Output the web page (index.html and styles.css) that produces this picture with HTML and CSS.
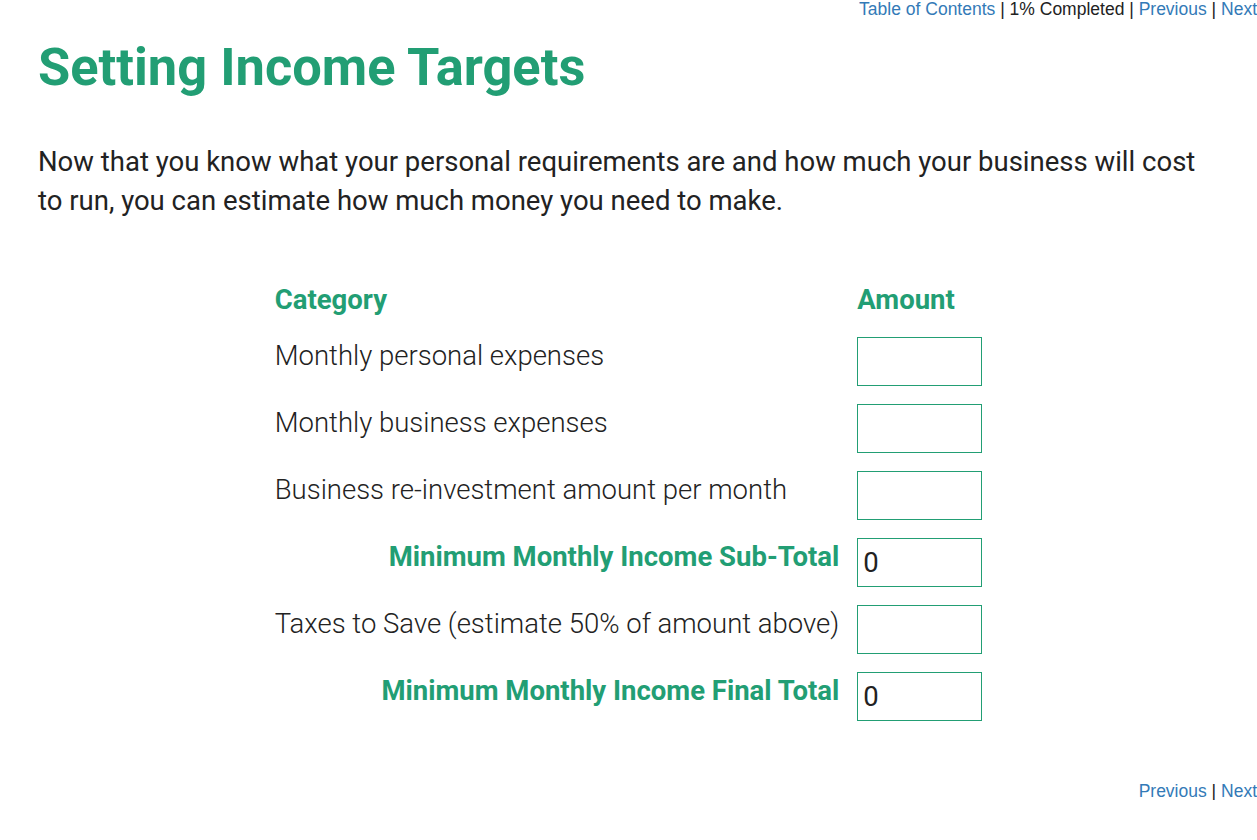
FILE: index.html
```html
<!DOCTYPE html>
<html lang="en">
<head>
    <meta charset="UTF-8">
    <meta name="viewport" content="width=device-width, initial-scale=1.0">
    <title>Setting Income Targets</title>
    <link rel="stylesheet" href="styles.css">
</head>
<body>
    <div class="nav">
        <a href="#">Table of Contents</a> | 1% Completed | <a href="#">Previous</a> | <a href="#">Next</a>
    </div>

    <div class="content">
        <h1>Setting Income Targets</h1>
        <p>Now that you know what your personal requirements are and how much your business will cost to run, you can estimate how much money you need to make.</p>

        <table class="targets">
            <tr>
                <th>Category</th>
                <th>Amount</th>
            </tr>
            <tr>
                <td>Monthly personal expenses</td>
                <td><input type="text"></td>
            </tr>
            <tr>
                <td>Monthly business expenses</td>
                <td><input type="text"></td>
            </tr>
            <tr>
                <td>Business re-investment amount per month</td>
                <td><input type="text"></td>
            </tr>
            <tr>
                <td class="total">Minimum Monthly Income Sub-Total</td>
                <td><input type="text" value="0"></td>
            </tr>
            <tr>
                <td>Taxes to Save (estimate 50% of amount above)</td>
                <td><input type="text"></td>
            </tr>
            <tr>
                <td class="total">Minimum Monthly Income Final Total</td>
                <td><input type="text" value="0"></td>
            </tr>
        </table>
    </div>

    <div class="nav bottom">
        <a href="#">Previous</a> | <a href="#">Next</a>
    </div>
</body>
</html>
```

FILE: styles.css
```css
body {
    margin: 0;
    font-family: Roboto, "Liberation Sans", sans-serif;
    color: #222;
}
.nav {
    font-family: "Liberation Sans", Arial, sans-serif;
    font-size: 17.5px;
    line-height: 18px;
    text-align: right;
    color: #222;
}
.nav a {
    color: #337ab7;
    text-decoration: none;
}
.nav.bottom {
    margin-top: 52px;
}
.content {
    padding: 0 38px;
}
h1 {
    color: #229e74;
    font-size: 52.4px;
    font-weight: 700;
    margin: 17px 0 0;
    line-height: 64px;
}
p {
    font-size: 27.5px;
    line-height: 39px;
    margin: 43px 0 0;
}
.targets {
    margin: 61px auto 0;
    border-collapse: collapse;
}
.targets th {
    color: #229e74;
    font-size: 27.5px;
    font-weight: 700;
    text-align: left;
    line-height: 38px;
    padding: 0 9px 9px;
}
.targets td {
    font-size: 27.5px;
    font-weight: 300;
    padding: 9px;
    vertical-align: top;
    line-height: 38px;
}
.targets td.total {
    color: #229e74;
    font-weight: 700;
    text-align: right;
}
.targets input {
    box-sizing: border-box;
    width: 125px;
    height: 49px;
    border: 1px solid #229e74;
    font-family: Roboto, sans-serif;
    font-size: 27.5px;
    padding: 0 5px;
    color: #222;
    display: block;
}
```
